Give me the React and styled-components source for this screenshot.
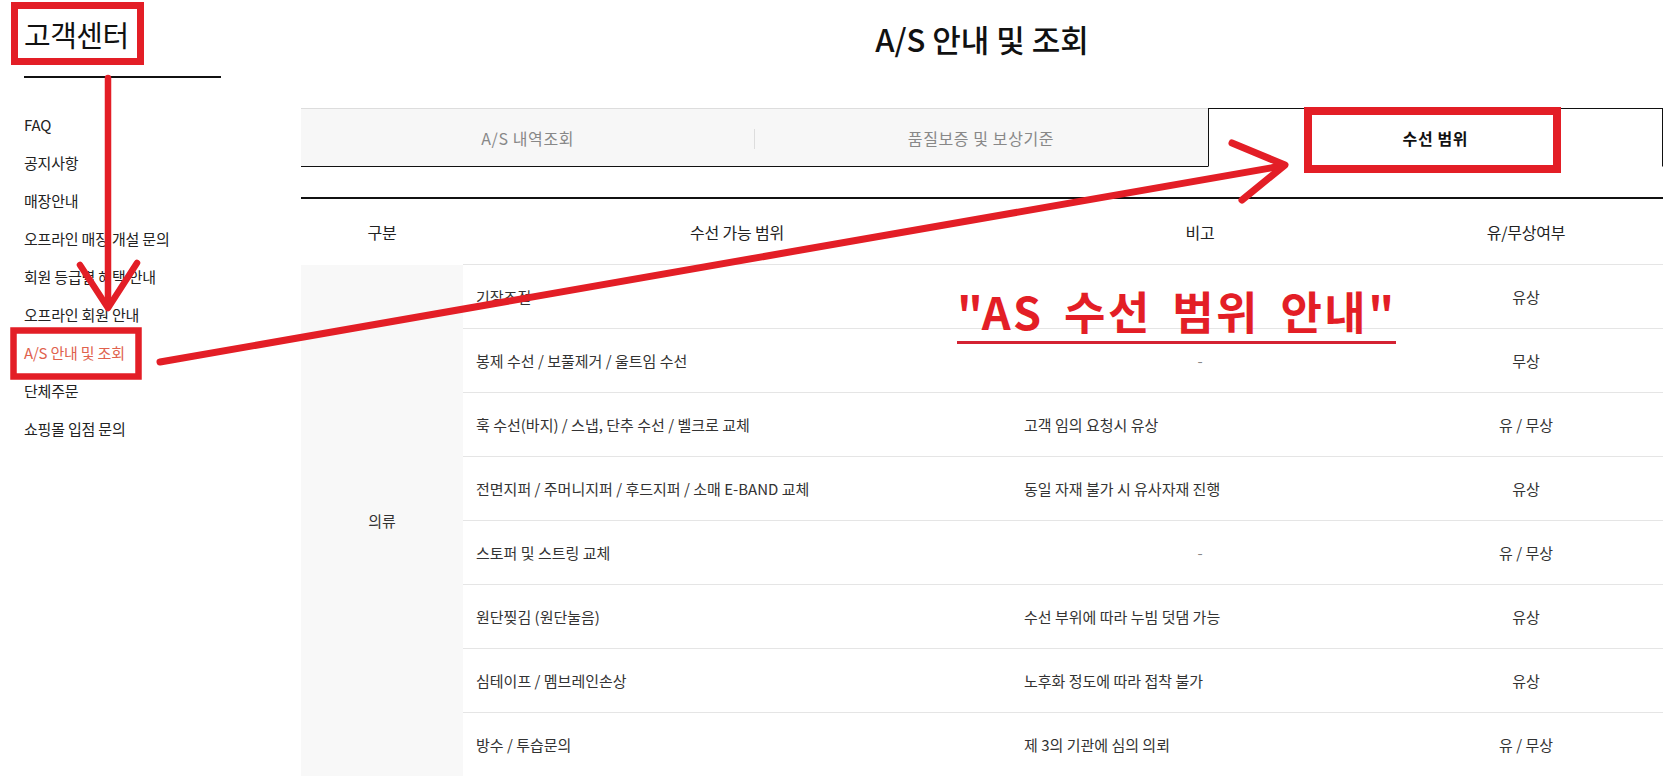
import styled, { createGlobalStyle } from "styled-components"

const GlobalStyle = createGlobalStyle`
    body {
        margin: 0;
        background: #ffffff;
        color: #222222;
        font-family: "Noto Sans CJK KR", "Noto Sans", sans-serif;
    }
    ul {
        list-style: none;
        margin: 0;
        padding: 0;
    }
`

const menu = [
    "FAQ",
    "공지사항",
    "매장안내",
    "오프라인 매장 개설 문의",
    "회원 등급별 혜택 안내",
    "오프라인 회원 안내",
    "A/S 안내 및 조회",
    "단체주문",
    "쇼핑몰 입점 문의",
]

const tabs = ["A/S 내역조회", "품질보증 및 보상기준", "수선 범위"]

const rows = [
    ["기장조절", "", "유상"],
    ["봉제 수선 / 보풀제거 / 울트임 수선", "-", "무상"],
    ["훅 수선(바지) / 스냅, 단추 수선 / 벨크로 교체", "고객 임의 요청시 유상", "유 / 무상"],
    ["전면지퍼 / 주머니지퍼 / 후드지퍼 / 소매 E-BAND 교체", "동일 자재 불가 시 유사자재 진행", "유상"],
    ["스토퍼 및 스트링 교체", "-", "유 / 무상"],
    ["원단찢김 (원단눌음)", "수선 부위에 따라 누빔 덧댐 가능", "유상"],
    ["심테이프 / 멤브레인손상", "노후화 정도에 따라 접착 불가", "유상"],
    ["방수 / 투습문의", "제 3의 기관에 심의 의뢰", "유 / 무상"],
]

const RED = "#e31e26"

export default function App() {
    return (
        <Page>
            <GlobalStyle />
            <Sidebar>
                <SideTitle>고객센터</SideTitle>
                <SideRule />
                <SideMenu>
                    {menu.map((item) => (
                        <SideItem key={item} $active={item === "A/S 안내 및 조회"}>{item}</SideItem>
                    ))}
                </SideMenu>
            </Sidebar>

            <Main>
                <PageTitle>A/S 안내 및 조회</PageTitle>
                <Tabs>
                    {tabs.map((tab, index) => (
                        <Tab key={tab} $active={index === 2} $sep={index === 1}>{tab}</Tab>
                    ))}
                </Tabs>

                <Table>
                    <colgroup>
                        <col style={{ width: 162 }} />
                        <col style={{ width: 548 }} />
                        <col style={{ width: 378 }} />
                        <col />
                    </colgroup>
                    <thead>
                        <tr>
                            <Th>구분</Th>
                            <Th>수선 가능 범위</Th>
                            <Th>비고</Th>
                            <Th>유/무상여부</Th>
                        </tr>
                    </thead>
                    <tbody>
                        {rows.map((row, index) => (
                            <tr key={row[0]}>
                                {index === 0 && <GroupCell rowSpan={rows.length}>의류</GroupCell>}
                                <Td>{row[0]}</Td>
                                <Td $center={row[1] === "-"} $muted={row[1] === "-"}>{row[1]}</Td>
                                <Td $center>{row[2]}</Td>
                            </tr>
                        ))}
                    </tbody>
                </Table>
            </Main>

            <Marks width="1663" height="776" viewBox="0 0 1663 776">
                <g fill="none" stroke={RED} strokeLinecap="round" strokeLinejoin="round">
                    <rect x="14.5" y="5.5" width="126" height="56" strokeWidth="7" strokeLinecap="butt" strokeLinejoin="miter" />
                    <rect x="13.5" y="330.5" width="125" height="46" strokeWidth="6.5" strokeLinecap="butt" strokeLinejoin="miter" />
                    <rect x="1308" y="111" width="249" height="58" strokeWidth="8" strokeLinecap="butt" strokeLinejoin="miter" />
                    <line x1="108" y1="78" x2="108" y2="306" strokeWidth="6.5" />
                    <polyline points="80,265 108,308 137,263" strokeWidth="6.5" />
                    <line x1="160" y1="362" x2="1282" y2="166" strokeWidth="7" />
                    <polyline points="1232,143 1285,165 1242,200" strokeWidth="7" />
                </g>
            </Marks>
            <Callout>"AS 수선 범위 안내"</Callout>
        </Page>
    )
}

const Page = styled.div`
    position: relative;
    display: flex;
    width: 1663px;
    height: 776px;
    overflow: hidden;
`

const Sidebar = styled.aside`
    width: 301px;
    flex-shrink: 0;
    box-sizing: border-box;
    padding: 16px 0 0 24px;
`

const SideTitle = styled.h2`
    margin: 0;
    font-size: 29px;
    line-height: 36px;
    font-weight: 400;
    letter-spacing: -0.5px;
    color: #111111;
`

const SideRule = styled.div`
    width: 197px;
    height: 2px;
    margin-top: 24px;
    background: #111111;
`

const SideMenu = styled.ul`
    margin-top: 28px !important;
`

const SideItem = styled.li`
    font-size: 15px;
    line-height: 38px;
    letter-spacing: -0.2px;
    color: ${(p) => (p.$active ? "#e0614d" : "#222222")};
`

const Main = styled.main`
    flex: 1;
    display: flex;
    flex-direction: column;
    min-width: 0;
`

const PageTitle = styled.h1`
    margin: 0;
    padding-top: 19px;
    text-align: center;
    font-size: 31px;
    line-height: 40px;
    font-weight: 500;
    letter-spacing: 0;
    color: #111111;
`

const Tabs = styled.div`
    display: flex;
    height: 62px;
    margin-top: 49px;
`

const Tab = styled.div`
    position: relative;
    flex: 1;
    display: flex;
    align-items: center;
    justify-content: center;
    box-sizing: border-box;
    font-size: 16px;
    letter-spacing: 0.6px;
    background: ${(p) => (p.$active ? "#ffffff" : "#f7f7f7")};
    color: ${(p) => (p.$active ? "#111111" : "#888888")};
    font-weight: ${(p) => (p.$active ? 700 : 400)};
    border-top: 1px solid ${(p) => (p.$active ? "#111111" : "#dddddd")};
    border-bottom: 1px solid ${(p) => (p.$active ? "#ffffff" : "#111111")};
    border-left: ${(p) => (p.$active ? "1px solid #111111" : "none")};
    border-right: ${(p) => (p.$active ? "1px solid #111111" : "none")};

    &::before {
        content: "";
        display: ${(p) => (p.$sep ? "block" : "none")};
        position: absolute;
        left: 0;
        top: 20px;
        width: 1px;
        height: 20px;
        background: #dddddd;
    }
`

const Table = styled.table`
    width: 100%;
    margin-top: 30px;
    border-collapse: collapse;
    table-layout: fixed;
    border-top: 2px solid #111111;
`

const Th = styled.th`
    height: 65px;
    padding: 0;
    font-size: 16px;
    font-weight: 400;
    letter-spacing: -0.2px;
    color: #222222;
    text-align: center;
`

const Td = styled.td`
    height: 63px;
    padding: 0 13px;
    border-top: 1px solid #e5e5e5;
    font-size: 15px;
    letter-spacing: 0;
    color: ${(p) => (p.$muted ? "#888888" : "#333333")};
    text-align: ${(p) => (p.$center ? "center" : "left")};
    white-space: nowrap;
`

const GroupCell = styled.td`
    padding: 0;
    background: #f8f8f8;
    font-size: 15px;
    color: #333333;
    text-align: center;
    vertical-align: middle;
`

const Marks = styled.svg`
    position: absolute;
    left: 0;
    top: 0;
    pointer-events: none;
`

const Callout = styled.div`
    position: absolute;
    left: 957px;
    top: 288px;
    padding-bottom: 8px;
    border-bottom: 3px solid #d42232;
    font-size: 45px;
    line-height: 1;
    font-weight: 700;
    letter-spacing: 2.4px;
    word-spacing: 8px;
    color: ${RED};
    white-space: nowrap;
`
